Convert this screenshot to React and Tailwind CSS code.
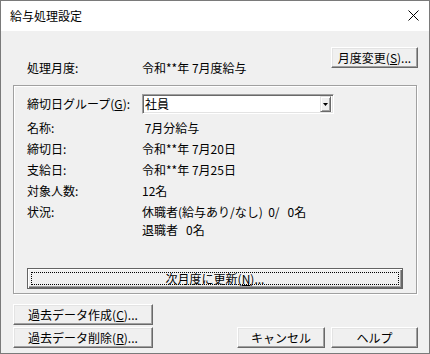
import React from "react";

const Btn = ({ children, className = "" }) => (
  <button
    className={`h-[21px] bg-[#f0f0f0] border border-t-white border-l-white border-r-[#696969] border-b-[#696969] shadow-[inset_-1px_-1px_0_#a0a0a0,inset_1px_1px_0_#e3e3e3] text-[12px] leading-none text-black flex items-center justify-center ${className}`}
  >
    {children}
  </button>
);

const Row = ({ label, children }) => (
  <div className="flex h-[21px] items-center">
    <div className="w-[115px] shrink-0">{label}</div>
    <div className="whitespace-pre">{children}</div>
  </div>
);

export default function App() {
  return (
    <div className="w-[430px] h-[354px] border border-[#7a7a7a] bg-[#f0f0f0] flex flex-col font-['Noto_Sans_CJK_JP',sans-serif] text-[12px] text-black select-none">
      {/* title bar */}
      <div className="h-[30px] bg-white flex items-center justify-between pl-[9px] pr-[10px] shrink-0">
        <span className="text-[12px] leading-none">給与処理設定</span>
        <svg width="11" height="11" viewBox="0 0 11 11" className="mb-[1px]">
          <path d="M0.5 0.5 L10.5 10.5 M10.5 0.5 L0.5 10.5" stroke="#000" strokeWidth="1" fill="none" />
        </svg>
      </div>

      {/* body */}
      <div className="flex flex-col pl-[12px] pr-[11px] pt-[16px]">
        <div className="flex items-start justify-between">
          <div className="flex pl-[14px] pt-[14px] leading-[14px]">
            <div className="w-[115px]">処理月度:</div>
            <div>令和**年 7月度給与</div>
          </div>
          <Btn className="w-[87px]">
            月度変更(<span className="underline">S</span>)...
          </Btn>
        </div>

        {/* group box */}
        <div className="mt-[10px] w-[404px] border border-[#a0a0a0] shadow-[inset_1px_1px_0_#fff,1px_1px_0_#fff] pt-[8px] pb-[4px] pl-[13px] pr-[13px] flex flex-col">
          <div className="flex h-[20px] items-center">
            <div className="w-[115px] shrink-0">
              締切日グループ(<span className="underline">G</span>):
            </div>
            <div className="w-[192px] h-[20px] bg-white border border-t-[#a0a0a0] border-l-[#a0a0a0] border-r-white border-b-white shadow-[inset_1px_1px_0_#696969,inset_-1px_-1px_0_#e3e3e3] flex items-center pl-[2px] pr-[2px] py-[2px]">
              <span className="flex-1 leading-none">社員</span>
              <div className="w-[11px] h-[16px] bg-[#f0f0f0] border border-t-[#e3e3e3] border-l-[#e3e3e3] border-r-[#696969] border-b-[#696969] shadow-[inset_1px_1px_0_#fff,inset_-1px_-1px_0_#a0a0a0] flex items-center justify-center">
                <svg width="5" height="3" viewBox="0 0 5 3">
                  <polygon points="0,0 5,0 2.5,3" fill="#000" />
                </svg>
              </div>
            </div>
          </div>

          <div className="mt-[3px] flex flex-col">
            <Row label="名称:"> 7月分給与</Row>
            <Row label="締切日:">令和**年 7月20日</Row>
            <Row label="支給日:">令和**年 7月25日</Row>
            <Row label="対象人数:">12名</Row>
            <div className="flex items-start">
              <div className="w-[115px] shrink-0 leading-[21px]">状況:</div>
              <div className="flex flex-col whitespace-pre">
                <div className="leading-[21px]">休職者(給与あり/なし)  0/   0名</div>
                <div className="leading-[15px]">退職者   0名</div>
              </div>
            </div>
          </div>

          <button className="mt-[31px] h-[21px] bg-[#f0f0f0] border border-[#646464] shadow-[inset_1px_1px_0_#fff,inset_-1px_-1px_0_#696969,inset_-2px_-2px_0_#a0a0a0] p-[3px] text-[12px] leading-none text-black">
            <div className="h-full border border-dotted border-black flex items-center justify-center">
              次月度に更新(<span className="underline">N</span>)...
            </div>
          </button>
        </div>

        {/* bottom buttons */}
        <div className="mt-[10px] flex flex-col gap-[2px]">
          <Btn className="w-[140px]">
            過去データ作成(<span className="underline">C</span>)...
          </Btn>
          <div className="flex items-center">
            <Btn className="w-[140px]">
              過去データ削除(<span className="underline">R</span>)...
            </Btn>
            <div className="flex-1" />
            <Btn className="w-[88px]">キャンセル</Btn>
            <Btn className="w-[87px] ml-[6px]">ヘルプ</Btn>
          </div>
        </div>
      </div>
    </div>
  );
}
